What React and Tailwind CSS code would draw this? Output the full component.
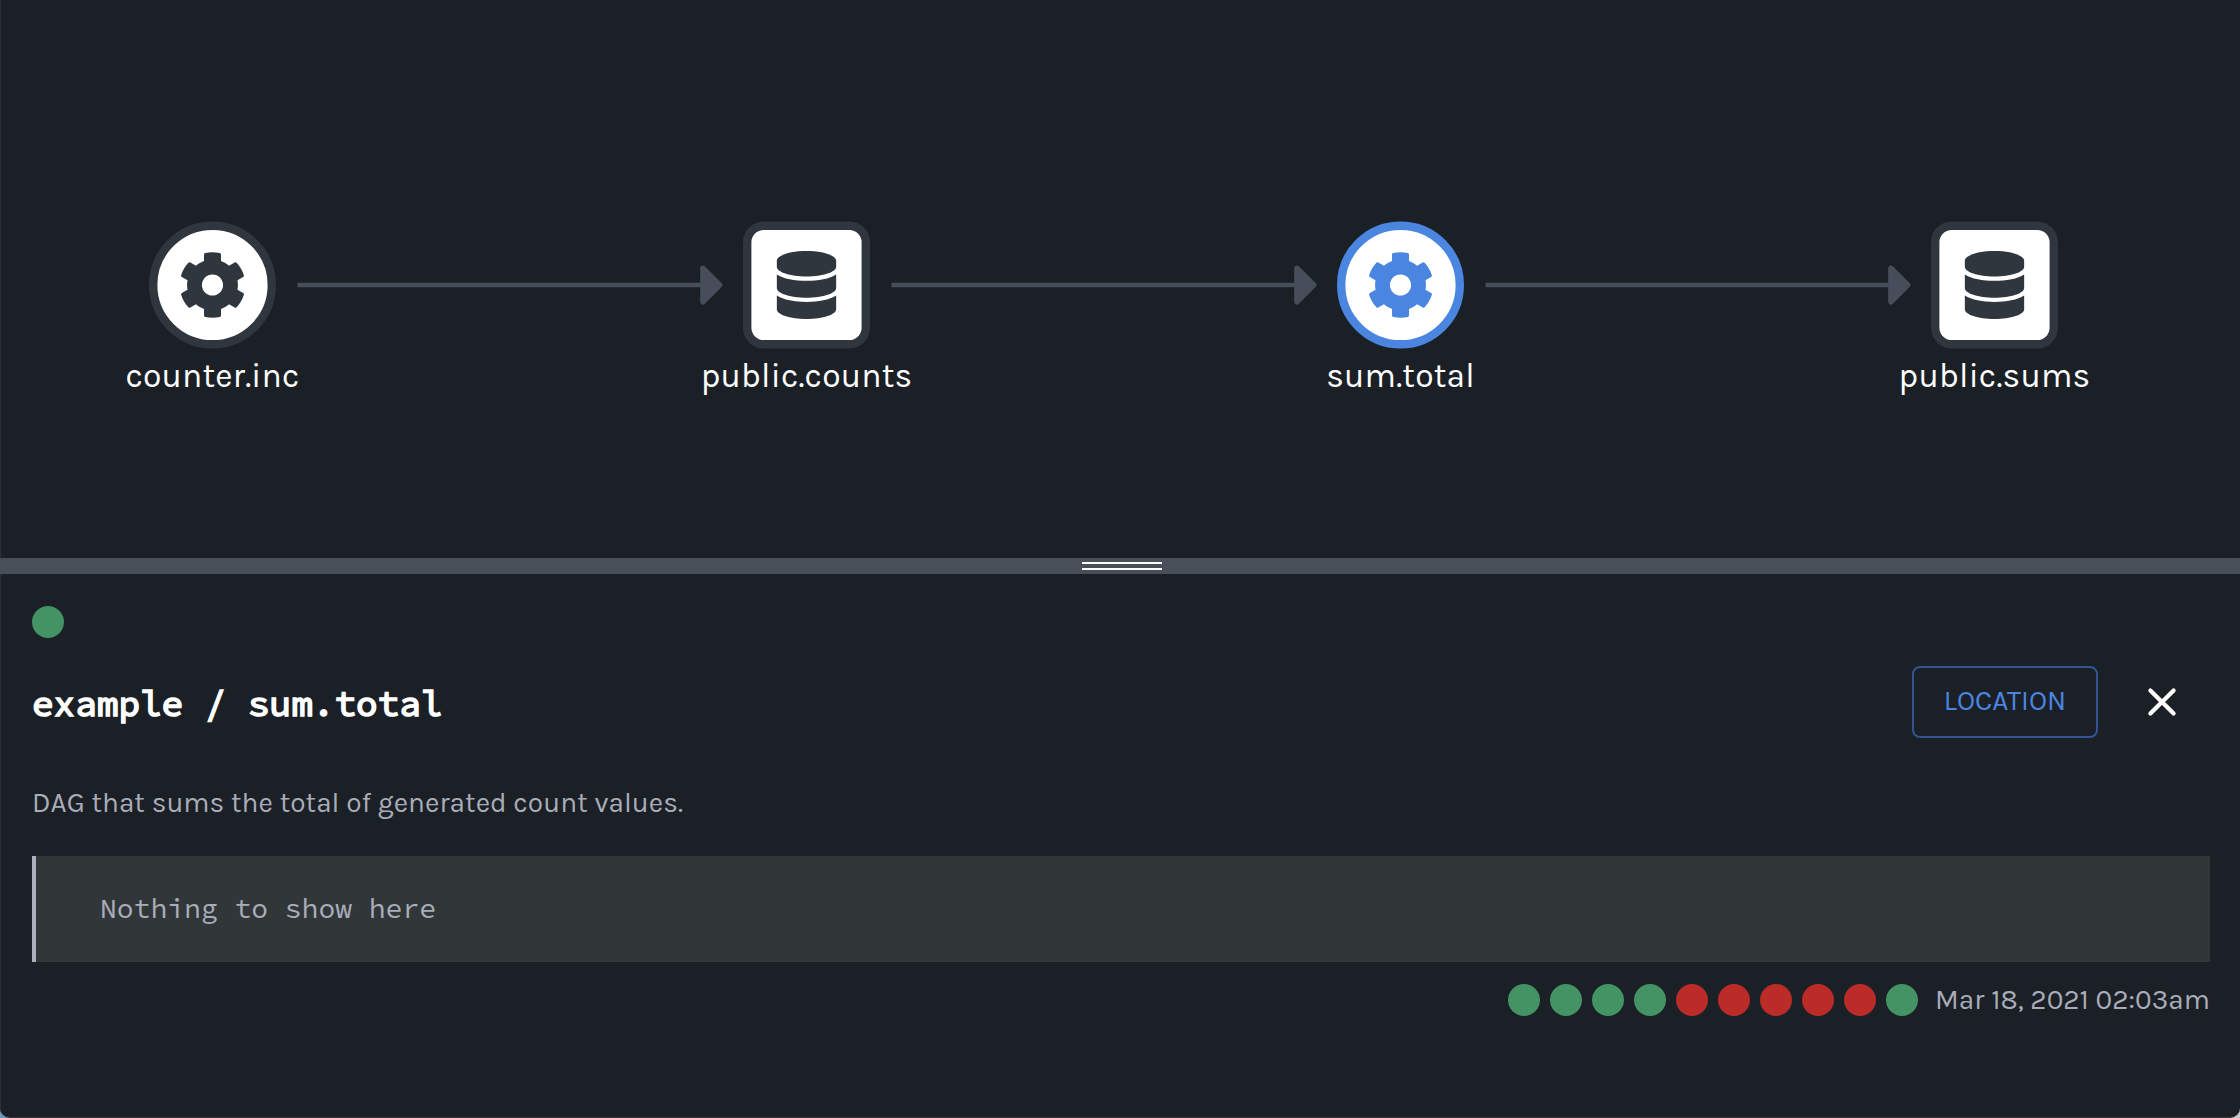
import { FaCog, FaDatabase } from "react-icons/fa";

const nodes = [
  { left: "left-[148px]", label: "counter.inc", kind: "job" },
  { left: "left-[742px]", label: "public.counts", kind: "data" },
  { left: "left-[1336px]", label: "sum.total", kind: "job", active: true },
  { left: "left-[1930px]", label: "public.sums", kind: "data" },
];

const edges = ["left-[297px]", "left-[891px]", "left-[1485px]"];

const runs = [true, true, true, true, false, false, false, false, false, true];

function Node({ left, label, kind, active }) {
  const Icon = kind === "job" ? FaCog : FaDatabase;
  return (
    <div className={`absolute top-[220px] flex w-[130px] flex-col items-center ${left}`}>
      <svg
        className={`h-[130px] w-[130px] shrink-0 ${active ? "text-[#4a86e0]" : "text-[#30363e]"}`}
        viewBox="0 0 130 130"
      >
        {kind === "job" ? (
          <circle cx="64.5" cy="65" r="59.300" fill="#fff" stroke="currentColor" strokeWidth="8.400" />
        ) : (
          <rect x="5.200" y="5.700" width="118.600" height="118.600" rx="16.500" fill="#fff" stroke="currentColor" strokeWidth="8.400" />
        )}
        <Icon x="30.600" y="31.100" size="67.800" />
      </svg>
      <span className="mt-[6px] mr-px whitespace-nowrap text-[33.6px] leading-[40px] tracking-[0.2px] text-white">{label}</span>
    </div>
  );
}

function Edge({ left }) {
  return (
    <svg className={`absolute top-[264px] h-[42px] w-[428px] ${left}`} viewBox="0 0 428 42">
      <path d="M0.5 21H406" stroke="#464e5a" strokeWidth="4.3" />
      <path d="M405.900 4.200L422.700 21L405.900 37.800Z" fill="#464e5a" stroke="#464e5a" strokeWidth="5.500" strokeLinejoin="round" />
    </svg>
  );
}

export default function App() {
  return (
    <div className="h-[1118px] w-[2240px] bg-linear-to-r from-[#6f9ab5] to-[#c9cbcd]">
      <div className="flex h-full flex-col overflow-hidden rounded-b-[10px] border-b border-[#3a363d] bg-[#1b1f26] font-['Karla','Liberation_Sans',sans-serif]">
        <section className="relative h-[558px] shrink-0 border-l border-[#2c3137]">
          <div className="absolute inset-y-0 -left-px">
            {edges.map((left) => <Edge key={left} left={left} />)}
            {nodes.map((node) => <Node key={node.label} {...node} />)}
          </div>
        </section>

        <div className="flex h-4 shrink-0 flex-col items-center gap-1 bg-[#474f59] pt-1 pl-1">
          <div className="h-0.5 w-20 bg-white" />
          <div className="h-0.5 w-20 bg-white" />
        </div>

        <section className="flex grow flex-col border-l border-[#2c3137] pt-8 pr-[30px] pl-[31px]">
          <div className="h-8 w-8 rounded-full bg-[#449364]" />
          <header className="mt-7 flex h-[72px] items-center justify-between">
            <h1 className="whitespace-pre pt-1 font-['Source_Code_Pro','Liberation_Mono',monospace] text-[36px] leading-[68px] font-normal text-white [-webkit-text-stroke:1.7px_#fff]">
              example / sum.total
            </h1>
            <div className="flex items-center">
              <button className="h-[72px] w-[186px] rounded-lg border-2 border-[#305590] pb-0.5 text-[28px] text-[#4a86e0]">LOCATION</button>
              <button aria-label="Close" className="mr-8 ml-[48px]">
                <svg className="h-8 w-8" viewBox="0 0 32 32">
                  <path d="M4.400 4.400L27.600 27.600M27.600 4.400L4.400 27.600" stroke="#fff" strokeWidth="4.200" strokeLinecap="round" />
                </svg>
              </button>
            </div>
          </header>
          <p className="mt-[45px] h-[41px] text-[28px] leading-10 tracking-[0.04px] text-[#a9adb9]">
            DAG that sums the total of generated count values.
          </p>
          <div className="mt-8 flex h-[106px] items-center border-l-4 border-[#abb0bd] bg-[#313639] pb-0.5 pl-16">
            <code className="font-['Source_Code_Pro','Liberation_Mono',monospace] text-[28px] text-[#a9adb9]">Nothing to show here</code>
          </div>
          <footer className="mt-[22px] flex h-8 items-center justify-end gap-2.5">
            {runs.map((ok, i) => (
              <div key={i} className={`h-8 w-8 rounded-full ${ok ? "bg-[#449364]" : "bg-[#bb2c28]"}`} />
            ))}
            <time className="ml-[7px] whitespace-nowrap text-[28px] leading-8 tracking-[0.05px] text-[#a9adb9]">Mar 18, 2021 02:03am</time>
          </footer>
        </section>
      </div>
    </div>
  );
}
